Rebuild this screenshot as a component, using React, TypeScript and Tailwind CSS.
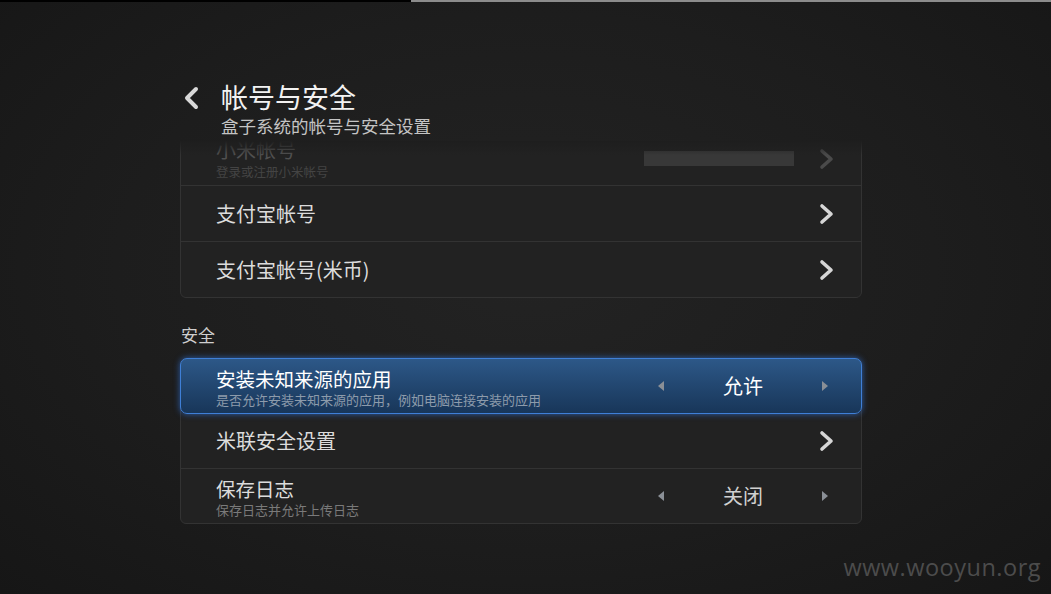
import React from "react";

const Chevron = ({ dim = false }: { dim?: boolean }) => (
  <svg width="16" height="22" viewBox="0 0 16 22" className="shrink-0">
    <path d="M3 3 L12 11 L3 19" fill="none" stroke={dim ? "#4a4a4a" : "#d6d6d6"} strokeWidth="3.6" strokeLinecap="round" strokeLinejoin="round" />
  </svg>
);

const TriLeft = () => (
  <svg width="6" height="10" viewBox="0 0 6 10"><path d="M6 0 L0 5 L6 10 Z" fill="#8a8f96" /></svg>
);
const TriRight = () => (
  <svg width="6" height="10" viewBox="0 0 6 10"><path d="M0 0 L6 5 L0 10 Z" fill="#8a8f96" /></svg>
);

const Option = ({ value, bright }: { value: string; bright?: boolean }) => (
  <div className="flex items-center w-[170px] mr-[33px]">
    <TriLeft />
    <div className={`flex-1 text-center text-[20px] ${bright ? "text-white" : "text-[#d0d0d0]"}`}>{value}</div>
    <TriRight />
  </div>
);

export default function App() {
  return (
    <div
      className="relative w-[1051px] h-[594px] overflow-hidden bg-[radial-gradient(ellipse_at_50%_45%,#232323_0%,#1d1d1d_55%,#161616_100%)]"
      style={{ fontFamily: '"Noto Sans CJK SC", "Noto Sans", sans-serif' }}
    >
      <div className="flex h-[2px]">
        <div className="w-[411px] bg-black" />
        <div className="flex-1 bg-[#8c8c8c]" />
      </div>

      <div className="ml-[180px] w-[682px]">
        {/* header */}
        <div className="pt-[77px] flex items-start">
          <div className="w-[41px] pl-[3px] pt-[7px]">
            <svg width="18" height="24" viewBox="0 0 18 24">
              <path d="M13 3 L4 12 L13 21" fill="none" stroke="#d8d8d8" strokeWidth="4" strokeLinecap="round" strokeLinejoin="round" />
            </svg>
          </div>
          <div className="flex flex-col">
            <div className="text-[27px] leading-[36px] text-[#f2f2f2]">帐号与安全</div>
            <div className="text-[17.5px] leading-[22px] text-[#c4c4c4]">盒子系统的帐号与安全设置</div>
          </div>
        </div>

        {/* scroll region */}
        <div className="relative mt-[4px] h-[157px] overflow-hidden">
          <div className="-mt-[10px] rounded-[6px] border border-[#333333] bg-[#222222] overflow-hidden">
            <div className="relative h-[54px] flex items-center pl-[35px] pr-[26px] border-b border-[#333333]">
              <div className="flex-1 flex flex-col">
                <div className="text-[20px] leading-[24px] text-[#505050]">小米帐号</div>
                <div className="text-[12.5px] leading-[16px] text-[#444444] mt-[2px]">登录或注册小米帐号</div>
              </div>
              <div className="w-[150px] h-[15px] bg-[#383838] mr-[25px]" />
              <Chevron dim />
            </div>
            <div className="h-[56px] flex items-center pl-[35px] pr-[26px] border-b border-[#333333]">
              <div className="flex-1 text-[20px] text-[#dcdcdc]">支付宝帐号</div>
              <Chevron />
            </div>
            <div className="h-[55px] flex items-center pl-[35px] pr-[26px]">
              <div className="flex-1 text-[20px] text-[#dcdcdc]">支付宝帐号(米币)</div>
              <Chevron />
            </div>
          </div>
          <div className="absolute left-0 right-0 top-0 h-[14px] bg-gradient-to-b from-[#1e1e1e] to-transparent" />
        </div>

        {/* security */}
        <div className="mt-[26px] pl-[1px] text-[17px] leading-[22px] text-[#cfcfcf]">安全</div>
        <div className="mt-[12px] rounded-[6px] border border-[#333333] bg-[#222222]">
          <div className="relative -m-[1px] h-[56px] flex items-center pl-[35px] rounded-[7px] border-[1.5px] border-[#3f7fd6] bg-gradient-to-b from-[#2d5888] to-[#183659] shadow-[0_0_6px_rgba(50,120,230,0.7)]">
            <div className="flex-1 flex flex-col pt-[1px]">
              <div className="text-[19.5px] leading-[25px] text-white">安装未知来源的应用</div>
              <div className="text-[13px] leading-[16px] text-[#8d9bab] mt-[1px]">是否允许安装未知来源的应用，例如电脑连接安装的应用</div>
            </div>
            <Option value="允许" bright />
          </div>
          <div className="h-[56px] flex items-center pl-[35px] pr-[26px] border-b border-[#333333]">
            <div className="flex-1 text-[20px] text-[#dcdcdc]">米联安全设置</div>
            <Chevron />
          </div>
          <div className="h-[54px] flex items-center pl-[35px]">
            <div className="flex-1 flex flex-col pt-[1px]">
              <div className="text-[19.5px] leading-[25px] text-[#dcdcdc]">保存日志</div>
              <div className="text-[13px] leading-[16px] text-[#7a7a7a] mt-[1px]">保存日志并允许上传日志</div>
            </div>
            <Option value="关闭" />
          </div>
        </div>
      </div>

      <div
        className="absolute right-[10px] bottom-[12px] text-[23.5px] leading-[30px] text-[#4c4c4c] tracking-[0.5px]"
        style={{ fontFamily: '"Open Sans", "Noto Sans", sans-serif' }}
      >
        www.wooyun.org
      </div>
    </div>
  );
}
